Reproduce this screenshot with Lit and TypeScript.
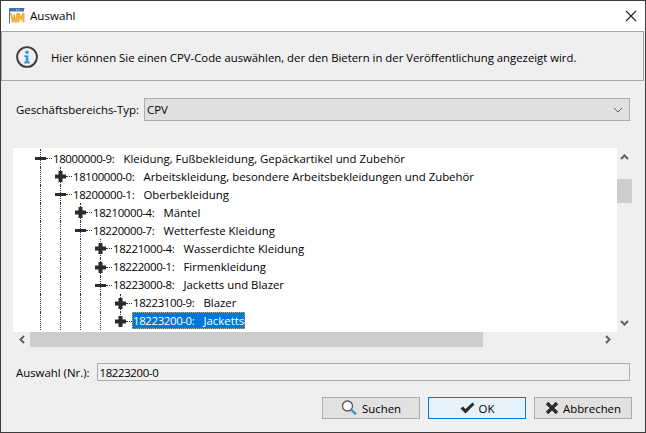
import { LitElement, html, css, svg } from "lit";
import { customElement } from "lit/decorators.js";

interface Node { level: number; code: string; label: string; open: boolean; last?: boolean; sel?: boolean }

const rows: Node[] = [
  { level: 0, code: "18000000-9:", label: "Kleidung, Fußbekleidung, Gepäckartikel und Zubehör", open: true },
  { level: 1, code: "18100000-0:", label: "Arbeitskleidung, besondere Arbeitsbekleidungen und Zubehör", open: false },
  { level: 1, code: "18200000-1:", label: "Oberbekleidung", open: true },
  { level: 2, code: "18210000-4:", label: "Mäntel", open: false },
  { level: 2, code: "18220000-7:", label: "Wetterfeste Kleidung", open: true },
  { level: 3, code: "18221000-4:", label: "Wasserdichte Kleidung", open: false },
  { level: 3, code: "18222000-1:", label: "Firmenkleidung", open: false },
  { level: 3, code: "18223000-8:", label: "Jacketts und Blazer", open: true },
  { level: 4, code: "18223100-9:", label: "Blazer", open: false },
  { level: 4, code: "18223200-0:", label: "Jacketts", open: false, last: true, sel: true },
];

@customElement("app-root")
export class AppRoot extends LitElement {
  static styles = css`
    :host { display: block; width: 646px; height: 433px; font-family: "Open Sans", "Noto Sans", sans-serif; font-size: 11.4px; color: #000; }
    * { box-sizing: border-box; }
    .win { width: 646px; height: 433px; background: #efefef; border: 1px solid #3c3c3c; display: flex; flex-direction: column; }
    .title { height: 30px; background: #fff; display: flex; align-items: center; padding: 0 6px 0 8px; gap: 5px; flex: none; font-size: 11.6px; }
    .title span { flex: 1; margin-top: -1px; }
    .info { height: 50px; flex: none; border: 1px solid #a6a6a6; display: flex; align-items: center; gap: 13px; padding: 2px 14px 0 14px; margin-right: 1px; font-size: 11.34px; }
    .main { flex: 1; display: flex; flex-direction: column; padding: 17px 0 0 0; min-height: 0; }
    .field { display: flex; align-items: center; margin-left: 15px; width: 614px; }
    .field label { white-space: nowrap; }
    .combo { margin-left: 5px; flex: 1; height: 23px; background: #e0e0e0; border: 1px solid #adadad; display: flex; align-items: center; justify-content: space-between; padding: 0 6px 0 2px; }
    .treebox { margin: 27px 0 0 12px; display: grid; grid-template-columns: 604px 15px; grid-template-rows: 184px 15px; width: 619px; }
    .tree { background: #fff; overflow: hidden; padding: 1px 0 0 12px; position: relative; }
    .row { height: 18.1px; display: flex; align-items: stretch; white-space: nowrap; }
    .cell { width: 20px; flex: none; position: relative; }
    .guide::before { content: ""; position: absolute; left: 15px; top: 0; bottom: 0; border-left: 1px dotted #333; }
    .half::before { bottom: 50%; }
    .exp { position: absolute; left: 10px; top: 4px; width: 11px; height: 11px; }
    .conn { position: absolute; left: 21px; top: 9px; width: 6px; border-top: 1px dotted #333; }
    .text { margin-left: 7px; padding: 0 1px; height: 17px; line-height: 17px; align-self: center; display: flex; gap: 9px; }
    .code { letter-spacing: -0.35px; }
    .text.sel { background: #0078d7; color: #fff; outline: 1px dotted #f0a040; outline-offset: -1px; }
    .vbar { background: #efefef; display: flex; flex-direction: column; align-items: center; justify-content: space-between; padding: 6px 0; position: relative; }
    .vthumb { position: absolute; left: 0; top: 31px; width: 15px; height: 24px; background: #cdcdcd; }
    .hbar { background: #efefef; display: flex; align-items: center; justify-content: space-between; padding: 0 6px; position: relative; }
    .hthumb { position: absolute; left: 17px; top: 0; width: 453px; height: 15px; background: #cdcdcd; }
    .sel-field { margin-top: 16px; }
    .sel-field .input { margin-left: 7px; flex: 1; height: 18px; border: 1px solid #adadad; display: flex; align-items: center; padding: 0 2px; }
    .buttons { display: flex; justify-content: flex-end; gap: 8px; margin-top: 16px; padding-right: 13px; }
    .btn { height: 22px; width: 98px; display: flex; align-items: center; justify-content: center; gap: 4px; background: #e1e1e1; border: 1px solid #adadad; }
    .btn.def { background: #e5f1fb; border: 1px solid #0078d7; }
  `;

  render() {
    return html`
      <div class="win">
        <div class="title">
          <svg width="16" height="16" viewBox="0 0 16 16"><path d="M.5 15.500V.5h15" fill="none" stroke="#3f6fa8"/><rect x="1" y="1" width="14" height="2.500" fill="#3f6fa8"/><path d="M7 2h1M9.500 2h1" stroke="#fff"/><path d="M2 5l1.800 9.500L5.300 8.500 7 14.500 8.500 5M9.500 14.500V5l2.500 6 2.500-6v9.500" fill="none" stroke="#eeb040" stroke-width="2"/></svg>
          <span>Auswahl</span>
          <svg width="16" height="16" viewBox="0 0 16 16"><path d="M3 3l10 10M13 3L3 13" stroke="#222" stroke-width="1.100" fill="none"/></svg>
        </div>
        <div class="info">
          <svg width="22" height="22" viewBox="0 0 22 22"><circle cx="11" cy="11" r="9.900" fill="none" stroke="#3c3c3c" stroke-width="1.900"/><circle cx="11" cy="6.300" r="1.800" fill="#3f97d6"/><path d="M8.300 9.200h4.100v6.400h1.400v1.900H8.300v-1.900h1.400v-4.500H8.300z" fill="#3f97d6"/></svg>
          <span>Hier können Sie einen CPV-Code auswählen, der den Bietern in der Veröffentlichung angezeigt wird.</span>
        </div>
        <div class="main">
          <div class="field">
            <label>Geschäftsbereichs-Typ:</label>
            <div class="combo"><span>CPV</span>
              <svg width="10" height="6" viewBox="0 0 10 6"><path d="M1 1l4 4 4-4" fill="none" stroke="#606060" stroke-width="1"/></svg>
            </div>
          </div>
          <div class="treebox">
            <div class="tree">
              ${rows.map((r) => this.renderRow(r))}
            </div>
            <div class="vbar">
              <svg width="9" height="6" viewBox="0 0 9 6"><path d="M1 5l3.500-3.500L8 5" fill="none" stroke="#606060" stroke-width="2"/></svg>
              <div class="vthumb"></div>
              <svg width="9" height="6" viewBox="0 0 9 6"><path d="M1 1l3.500 3.500L8 1" fill="none" stroke="#606060" stroke-width="2"/></svg>
            </div>
            <div class="hbar">
              <svg width="6" height="9" viewBox="0 0 6 9"><path d="M5 1L1.500 4.500 5 8" fill="none" stroke="#606060" stroke-width="2"/></svg>
              <div class="hthumb"></div>
              <svg width="6" height="9" viewBox="0 0 6 9"><path d="M1 1l3.500 3.500L1 8" fill="none" stroke="#606060" stroke-width="2"/></svg>
            </div>
            <div></div>
          </div>
          <div class="field sel-field">
            <label>Auswahl (Nr.):</label>
            <div class="input"><span class="code">18223200-0</span></div>
          </div>
          <div class="buttons">
            <div class="btn">
              <svg width="17" height="16" viewBox="0 0 17 16"><circle cx="6.500" cy="6" r="5" fill="#fff" stroke="#555" stroke-width="1.300"/><path d="M10 9.600l5 4.600" stroke="#3c8fd0" stroke-width="2.400"/></svg>
              <span>Suchen</span>
            </div>
            <div class="btn def">
              <svg width="15" height="12" viewBox="0 0 15 12"><path d="M.5 6.500L5.500 11.500 14.500 2.500 12.500 .5 5.500 7 3 4.500z" fill="#2b2b2b"/></svg>
              <span>OK</span>
            </div>
            <div class="btn">
              <svg width="14" height="12" viewBox="0 0 14 12"><path d="M2 1l10 10M12 1L2 11" stroke="#2b2b2b" stroke-width="3.400"/></svg>
              <span>Abbrechen</span>
            </div>
          </div>
        </div>
      </div>
    `;
  }

  renderRow(r: Node) {
    const cells = [];
    for (let i = 0; i < r.level; i++) {
      cells.push(html`<div class="cell guide"></div>`);
    }
    const sign = r.open
      ? svg`<rect x="0" y="4" width="11" height="3" fill="#2b2b2b"/>`
      : svg`<path d="M3.500 0h4v3.500H11v4H7.500V11h-4V7.500H0v-4h3.500z" fill="#2b2b2b"/>`;
    return html`<div class="row">
      ${cells}
      <div class="cell guide ${r.last ? "half" : ""}">
        <svg class="exp" viewBox="0 0 11 11">${sign}</svg>
        <div class="conn"></div>
      </div>
      <div class="text ${r.sel ? "sel" : ""}"><span class="code">${r.code}</span><span>${r.label}</span></div>
    </div>`;
  }
}
